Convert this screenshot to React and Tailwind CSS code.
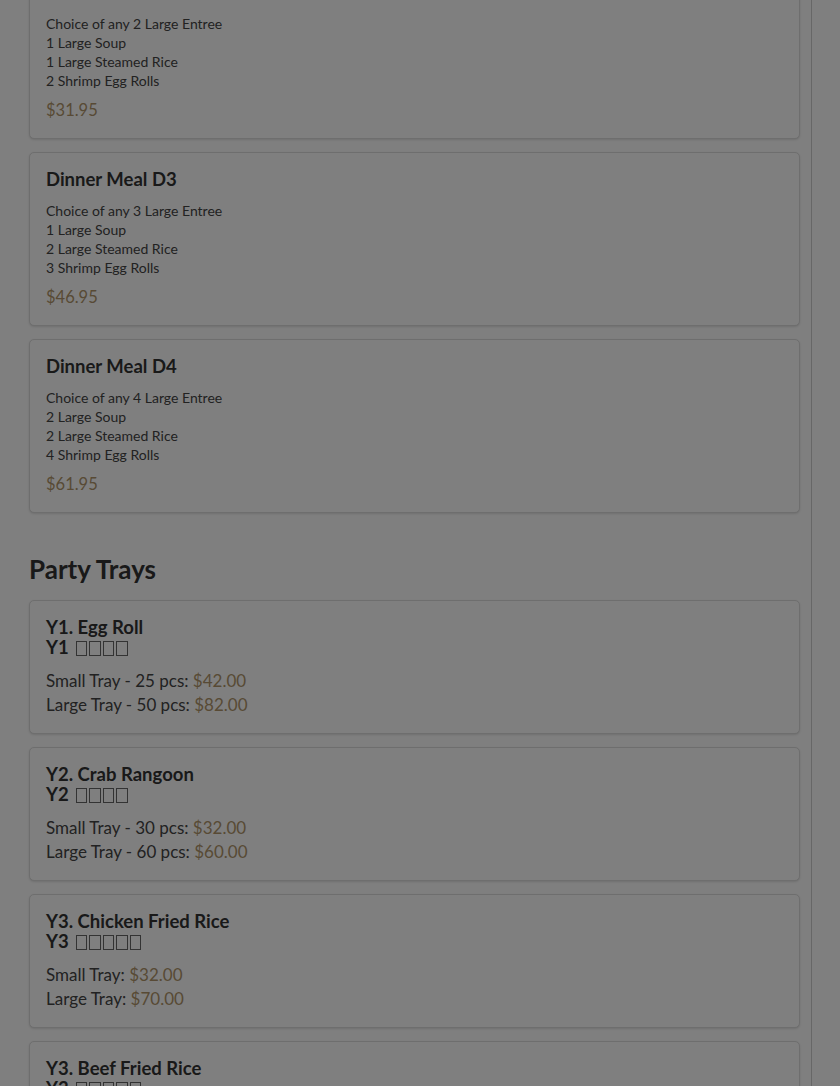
import React from "react";

const dinnerMeals = [
  {
    name: "Dinner Meal D2",
    lines: ["Choice of any 2 Large Entree", "1 Large Soup", "1 Large Steamed Rice", "2 Shrimp Egg Rolls"],
    price: "$31.95",
  },
  {
    name: "Dinner Meal D3",
    lines: ["Choice of any 3 Large Entree", "1 Large Soup", "2 Large Steamed Rice", "3 Shrimp Egg Rolls"],
    price: "$46.95",
  },
  {
    name: "Dinner Meal D4",
    lines: ["Choice of any 4 Large Entree", "2 Large Soup", "2 Large Steamed Rice", "4 Shrimp Egg Rolls"],
    price: "$61.95",
  },
];

const trays = [
  {
    name: "Y1. Egg Roll",
    code: "Y1",
    boxes: 4,
    sizes: [
      ["Small Tray - 25 pcs:", "$42.00"],
      ["Large Tray - 50 pcs:", "$82.00"],
    ],
  },
  {
    name: "Y2. Crab Rangoon",
    code: "Y2",
    boxes: 4,
    sizes: [
      ["Small Tray - 30 pcs:", "$32.00"],
      ["Large Tray - 60 pcs:", "$60.00"],
    ],
  },
  {
    name: "Y3. Chicken Fried Rice",
    code: "Y3",
    boxes: 5,
    sizes: [
      ["Small Tray:", "$32.00"],
      ["Large Tray:", "$70.00"],
    ],
  },
  {
    name: "Y3. Beef Fried Rice",
    code: "Y3",
    boxes: 5,
    sizes: [
      ["Small Tray:", "$32.00"],
      ["Large Tray:", "$70.00"],
    ],
  },
];

// missing-glyph boxes, as the browser drew the Chinese names
function Tofu({ count }) {
  return (
    <span className="inline-flex items-center gap-[2px] align-[-2px] ml-[7px]">
      {Array.from({ length: count }).map((_, i) => (
        <span key={i} className="inline-block w-[11.5px] h-[15px] border border-[#666]" />
      ))}
    </span>
  );
}

export default function App() {
  return (
    <div className="relative flex h-[1086px] bg-white overflow-hidden font-['Lato','Noto_Sans',sans-serif] text-[#333]">
      <div className="flex flex-col w-[812px] border-r border-[#cfcfcf] pl-[29px] pr-[11px]">
        <div className="-mt-[35px] flex flex-col gap-[13px]">
          {dinnerMeals.map((m) => (
            <div key={m.name} className="bg-white border border-[#dcdcdc] rounded-[5px] shadow-sm p-4">
              <h3 className="text-[18.5px] leading-5 font-bold text-[#333]">{m.name}</h3>
              <div className="mt-3 text-[14px] leading-[19px] text-[#444]">
                {m.lines.map((l) => (
                  <p key={l}>{l}</p>
                ))}
              </div>
              <p className="mt-2 text-[16.5px] leading-6 text-[#b0956a]">{m.price}</p>
            </div>
          ))}
        </div>

        <h2 className="mt-10 mb-[15px] text-[26px] leading-8 font-bold text-[#333]">Party Trays</h2>

        <div className="flex flex-col gap-[13px]">
          {trays.map((t) => (
            <div key={t.name} className="bg-white border border-[#dcdcdc] rounded-[5px] shadow-sm p-4">
              <h3 className="text-[18.5px] leading-5 font-bold text-[#333]">
                {t.name}
                <br />
                {t.code}
                <Tofu count={t.boxes} />
              </h3>
              <div className="mt-3 text-[17px] leading-6 text-[#444]">
                {t.sizes.map(([label, price]) => (
                  <p key={label}>
                    {label} <span className="text-[#b0956a]">{price}</span>
                  </p>
                ))}
              </div>
            </div>
          ))}
        </div>
      </div>

      <div className="absolute inset-0 bg-black/50" />
    </div>
  );
}
